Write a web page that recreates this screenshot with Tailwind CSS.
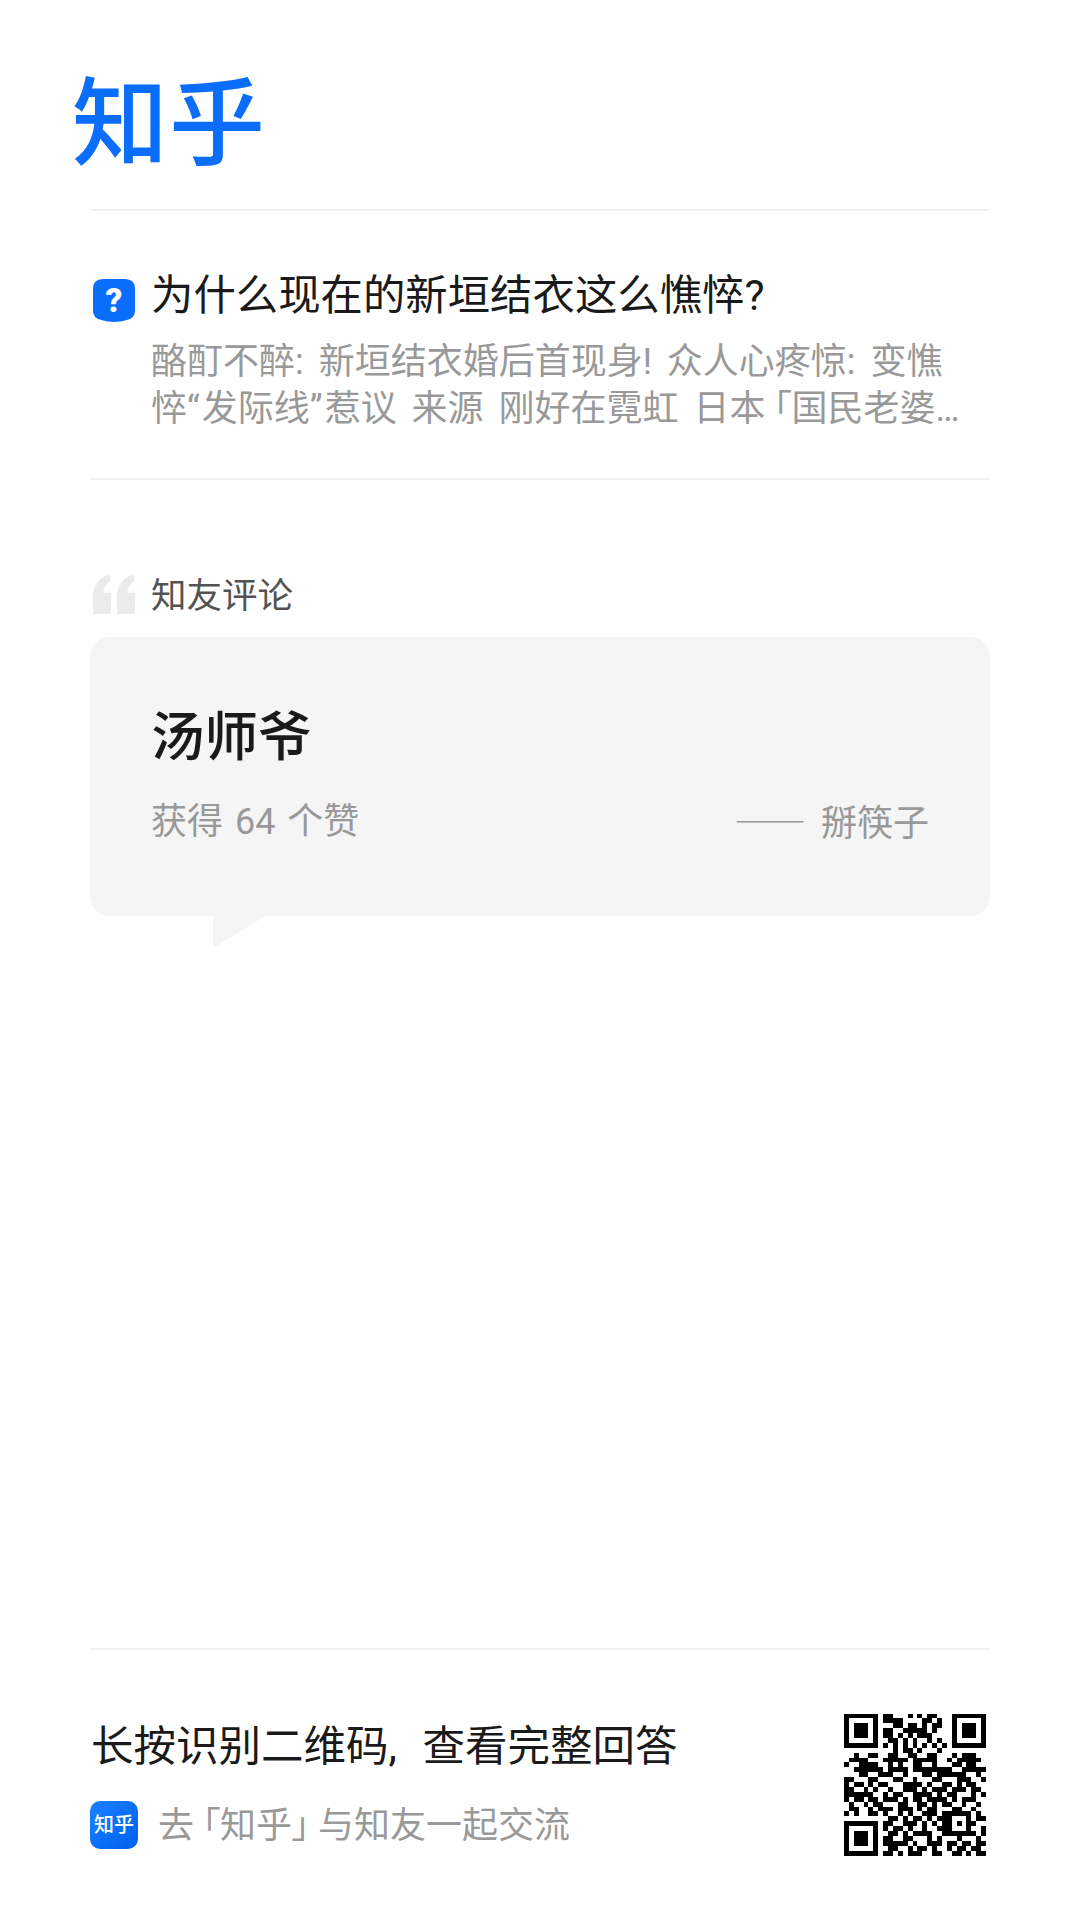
<!DOCTYPE html>
<html lang="zh-CN">
<head>
<meta charset="utf-8">
<script src="https://cdn.jsdelivr.net/npm/@tailwindcss/browser@4"></script>
<title>知乎</title>
</head>
<body class="bg-white">
<div class="w-[1080px] h-[1919px] flex flex-col px-[90px] font-['Roboto','Noto_Sans_CJK_SC',sans-serif] overflow-hidden">
  <header class="h-[211px] border-b-2 border-[#f2f2f2] shrink-0 relative">
    <div class="absolute left-[-18px] top-[64px] text-[96px] tracking-[1px] leading-[120px] font-medium text-[#0a6dfb] whitespace-nowrap">知乎</div>
  </header>
  <section class="h-[269px] shrink-0 border-b-2 border-[#f2f2f2] pt-[57px]">
    <div class="flex items-start gap-[16px] pl-[3px]">
      <svg class="w-[42px] h-[44px] mt-[11px] shrink-0" viewBox="0 0 42 44"><path d="M10 0H32Q42 0 42 10V32Q42 39 34 41Q21 45 8 41Q0 39 0 32V10Q0 0 10 0Z" fill="#0a6dfb"/><text x="21" y="33" text-anchor="middle" font-family="Roboto" font-weight="900" font-size="33" fill="#fff">?</text></svg>
      <div class="min-w-0 flex-1">
        <h1 class="text-[42.4px] leading-[56px] text-[#1a1a1a] whitespace-nowrap">为什么现在的新垣结衣这么憔悴?</h1>
        <p class="mt-[15px] text-[36px] leading-[47px] text-[#999999] [word-spacing:6px]">酪酊不醉: 新垣结衣婚后首现身! 众人心疼惊: 变憔<br>悴<span class="tracking-[2px]">“</span>发际线<span class="tracking-[2px]">”</span>惹议 来源 刚好在霓虹 日本<span class="[font-feature-settings:'palt'] ml-[8px]">「</span>国民老婆<span class="tracking-[3px]">…</span></p>
      </div>
    </div>
  </section>
  <section class="shrink-0 pt-[90px]">
    <div class="flex items-center gap-[16px] pl-[3px] h-[48px]">
      <svg class="w-[42px] h-[40px] shrink-0" viewBox="0 0 42 40"><path d="M17 0C8 3 1 9 0 20V40H18V19H10C11 14 13 10 17 8ZM41 0C32 3 25 9 24 20V40H42V19H34C35 14 37 10 41 8Z" fill="#ebebeb"/></svg>
      <span class="text-[35.5px] leading-[48px] relative top-[2px] text-[#535353]">知友评论</span>
    </div>
    <div class="relative mt-[19px] h-[279px] rounded-[20px] bg-[#f5f5f5] px-[61px] pt-[69px]">
      <div class="text-[53.5px] leading-[64px] font-medium text-[#1a1a1a]">汤师爷</div>
      <div class="mt-[26px] flex justify-between items-center text-[36px] leading-[48px] text-[#999999] [word-spacing:3px]">
        <span>获得 64 个赞</span>
        <span><span class="font-['Noto_Sans_CJK_SC',sans-serif] tracking-[3px]">——</span> 掰筷子</span>
      </div>
      <svg class="absolute left-[123px] top-[279px] w-[52px] h-[32px]" viewBox="0 0 52 32"><path d="M0 0H52L4 30Q0 32 0 28Z" fill="#f5f5f5"/></svg>
    </div>
  </section>
  <footer class="mt-auto h-[271px] shrink-0 border-t-2 border-[#f2f2f2] flex justify-between pt-[63px]">
    <div class="min-w-0">
      <div class="mt-[6px] text-[42.5px] leading-[56px] text-[#1a1a1a] pl-[1px] whitespace-nowrap [word-spacing:15px]">长按识别二维码, 查看完整回答</div>
      <div class="mt-[26px] flex items-center gap-[20px]">
        <div class="w-[48px] h-[48px] rounded-[10px] bg-gradient-to-br from-[#1a80ff] to-[#0060f0] text-white text-[20px] font-medium leading-[48px] text-center whitespace-nowrap">知乎</div>
        <span class="relative top-[1px] text-[36px] leading-[48px] text-[#999999] whitespace-nowrap">去<span class="[font-feature-settings:'palt'] ml-[8px]">「</span>知乎<span class="[font-feature-settings:'palt'] mr-[8px]">」</span>与知友一起交流</span>
      </div>
    </div>
    <svg class="w-[142px] h-[143px] shrink-0 mr-[4px]" viewBox="0 0 29 29" shape-rendering="crispEdges"><path id="qr" fill="#000" d=""/></svg>
  </footer>
</div>
<script>
const rows=[
"11111110110001010110001111111",
"10000010111100001101001000001",
"10111010001101101011001011101",
"10111010110011111010001011101",
"10111010110101011100001011101",
"10000010011010100101001000001",
"11111110101010101010101111111",
"00000000001011010001000000000",
"00100110011001100110001011100",
"01111000111110111110010111110",
"10011110010100110010001101100",
"00111111011110111111110011111",
"00011001110010001101111110010",
"11000110001100100011000111001",
"10110101100011110100110101100",
"11001010010011101011101110110",
"11111100101100111101011000101",
"10110110111010110111101011100",
"01001011000110011010110010010",
"01100101110111010110001100100",
"10100110100101001110111111010",
"00000000011010110101110001011",
"11111110110011101010110101100",
"10000010101101001001110001001",
"10111010011010111100111111101",
"10111010110011000101000100010",
"10111010111110100111011011011",
"10000010011001011010010110110",
"11111110110101110011001101011"];
let d="";rows.forEach((r,y)=>{[...r].forEach((c,x)=>{if(c==="1")d+=`M${x} ${y}h1v1h-1z`})});
document.getElementById("qr").setAttribute("d",d);
</script>
</body>
</html>
